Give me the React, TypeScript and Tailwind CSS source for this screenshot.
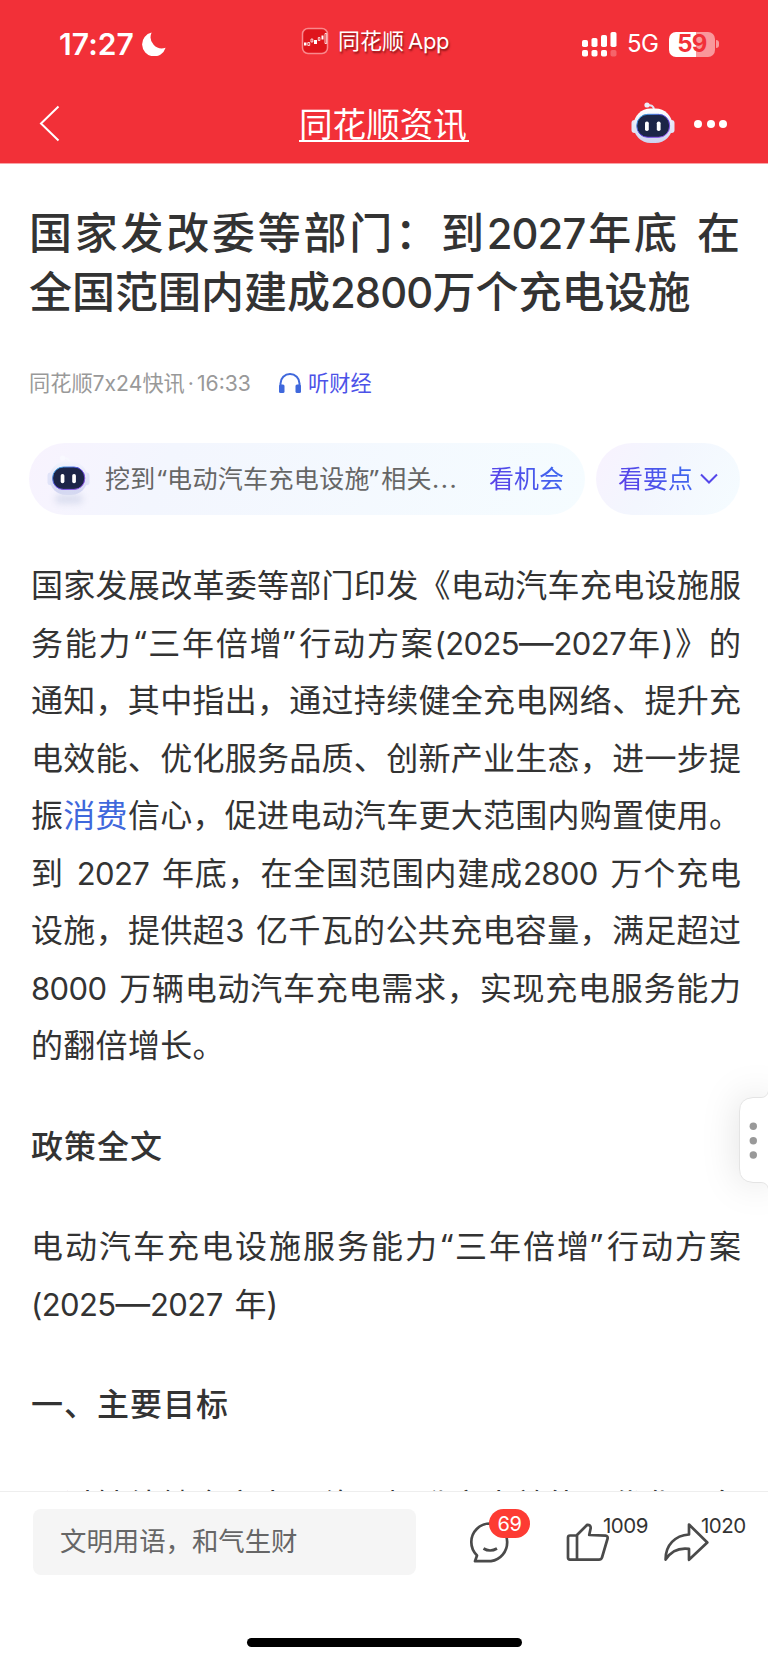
import React from 'react';

interface TextLineProps {
  children: React.ReactNode;
  last?: boolean;
}

interface RobotProps {
  id: string;
  className?: string;
  faded?: boolean;
}

const signalBars = [
  { x: 0, y: 8, h: 7 },
  { x: 9.5, y: 6, h: 9 },
  { x: 19, y: 3, h: 12 },
  { x: 28.5, y: 0, h: 15 },
];

// One row of article text; every row except the last one of a paragraph is justified
function TextLine({ children, last = false }: TextLineProps) {
  return (
    <span
      className={
        last
          ? 'block whitespace-nowrap text-left'
          : 'block whitespace-nowrap text-justify [text-align-last:justify]'
      }
    >
      {children}
    </span>
  );
}

// Latin digits sit a little tighter than the Chinese text around them
function Num({ children }: { children: React.ReactNode }) {
  return <span className="text-[0.97em] leading-none tracking-[-0.02em]">{children}</span>;
}

function Dash() {
  return <span className="text-[1.08em] leading-none">—</span>;
}

function Quoted({ children }: { children: React.ReactNode }) {
  return (
    <>
      <span className="pl-[0.08em] font-['Noto_Sans'] leading-none">“</span>
      {children}
      <span className="pr-[0.08em] font-['Noto_Sans'] leading-none">”</span>
    </>
  );
}

function Robot({ id, className, faded = false }: RobotProps) {
  return (
    <svg viewBox="0 0 44 42" className={className} fill="none">
      <defs>
        <linearGradient id={`${id}-head`} x1="0" y1="0" x2="0" y2="1">
          <stop offset="0" stopColor={faded ? '#f4f5fd' : '#ffffff'} />
          <stop offset="1" stopColor={faded ? '#cfd3f2' : '#cdd2ef'} />
        </linearGradient>
        <linearGradient id={`${id}-rim`} x1="0" y1="0" x2="1" y2="1">
          <stop offset="0" stopColor="#38bde8" />
          <stop offset="0.5" stopColor="#5a3fe0" />
          <stop offset="1" stopColor="#a45cf0" />
        </linearGradient>
      </defs>
      <path d="M16 3.5C20 2.5 23 4 23 8" stroke={faded ? '#f7f8fe' : '#dfe2f3'} strokeWidth="2" />
      <circle cx="16" cy="3" r="2.6" fill={faded ? '#f9f9ff' : '#eceefa'} />
      <rect x="0.5" y="18" width="6" height="13" rx="3" fill={faded ? '#e0e3f8' : '#e3e6f6'} />
      <rect x="37.5" y="18" width="6" height="13" rx="3" fill={faded ? '#e0e3f8' : '#e3e6f6'} />
      <rect x="2.5" y="6.5" width="39" height="34.5" rx="17" fill={`url(#${id}-head)`} />
      <rect x="5.8" y="12.3" width="32.8" height="23" rx="11" fill="#1c2547" stroke={`url(#${id}-rim)`} />
      <rect x="14" y="19.5" width="3.8" height="9.5" rx="1.8" fill="#fff" />
      <rect x="25.8" y="19.5" width="3.8" height="9.5" rx="1.8" fill="#fff" />
    </svg>
  );
}

function StatusBar() {
  return (
    <div className="flex h-[88px] items-center">
      <div className="flex w-[301px] items-center pl-[59px]">
        <span className="w-[76px] whitespace-nowrap text-[30px] font-semibold leading-none tracking-[0.1px]">17:27</span>
        <svg viewBox="0 0 24 24" className="ml-[7px] h-6 w-6" fill="#fff">
          <path d="M9.6 0.6A12 12 0 1 0 23.6 15.8A11.3 11.3 0 0 1 9.6 0.6Z" />
        </svg>
      </div>
      <div className="flex w-[281px] items-center pb-1.5">
        <svg viewBox="0 0 28 28" className="h-7 w-7" fill="none">
          <rect x="1.5" y="1.5" width="25" height="25" rx="5.5" fill="#df151c" stroke="#f9888c" strokeWidth="1.5" />
          <path d="M3 15.5h2.5v3H3zM13 13h3v4h-3zM20.5 8.5h2v4h-2z" fill="#fff" />
          <path d="M6.8 15.5h1.9v3H6.8zM10 12h1.8v3H10zM17.3 10.5h1.6v3h-1.6zM24 6.5h1.7v10H24z" stroke="#fff" strokeWidth="0.8" />
        </svg>
        <span className="ml-[9px] whitespace-nowrap text-[22px] leading-7 [text-shadow:1px_2px_2px_rgba(70,0,0,0.6)]">
          同花顺<span className="ml-1 tracking-[-0.3px]">App</span>
        </span>
      </div>
      <svg viewBox="0 0 36 25" className="h-[25px] w-9" fill="#fff">
        {signalBars.map((bar, index) => (
          <g key={bar.x}>
            <rect x={bar.x} y={bar.y} width="6" height={bar.h} rx="1.8" />
            <rect x={bar.x} y="18" width="6" height="6.5" rx="1.8" opacity={index === 3 ? 0.25 : 1} />
          </g>
        ))}
      </svg>
      <span className="ml-[9px] w-[34px] text-[24px] leading-none tracking-[-0.5px]">5G</span>
      <div className="ml-[8px] flex h-[25px] w-[46px] items-center justify-center rounded-[7px] bg-[linear-gradient(90deg,#fff_58%,#f9989b_58%)] text-[24px] font-bold leading-none tracking-[-0.8px] text-[#f23038]">
        59
      </div>
      <span className="ml-[1px] h-2 w-[3px] rounded-r-full bg-[#f9989b]" />
    </div>
  );
}

function NavBar() {
  return (
    <div className="flex h-[75px] items-center">
      <svg viewBox="0 0 21 37" className="mb-1 ml-[39px] h-[37px] w-[21px]" fill="none" stroke="#fff" strokeWidth="2">
        <path d="M19.5 1.5L2 18.5L19.5 35.5" />
      </svg>
      <h1 className="ml-[239px] h-[32px] w-[170px] whitespace-nowrap border-b-2 border-white text-[33.6px] leading-[30px]">
        同花顺资讯
      </h1>
      <Robot id="nav" className="mb-1.5 ml-[162px] h-[42px] w-11" />
      <div className="mb-[3px] ml-[19px] flex gap-[4.5px]">
        <span className="h-2 w-2 rounded-full bg-white" />
        <span className="h-2 w-2 rounded-full bg-white" />
        <span className="h-2 w-2 rounded-full bg-white" />
      </div>
    </div>
  );
}

function InsightBar() {
  return (
    <div className="-ml-px mt-[44px] flex h-[72px] w-[711px] gap-[11px]">
      <div className="flex w-[556px] items-center rounded-full bg-[linear-gradient(115deg,#f8f3fe_0%,#f3f6fe_25%,#f5fcff_100%)] pl-[18px]">
        <div className="flex w-[43px] flex-col items-center">
          <Robot id="insight" className="h-[41px] w-[43px]" faded />
          <span className="-mt-0.5 h-2.5 w-7 rounded-full bg-[#dcdff0] blur-[3px]" />
        </div>
        <span className="ml-[15px] w-[354px] whitespace-nowrap text-[25px] leading-9 tracking-[0.35px] text-[#666]">
          挖到<Quoted>电动汽车充电设施</Quoted>相关<span className="tracking-[1.6px]">...</span>
        </span>
        <span className="ml-[30px] whitespace-nowrap bg-[linear-gradient(60deg,#5e3be6,#3a6cf0)] bg-clip-text text-[25px] leading-9 text-transparent">
          看机会
        </span>
      </div>
      <div className="flex w-[144px] items-center rounded-full bg-[linear-gradient(120deg,#f8f2fe_0%,#f3f6fe_40%,#f5fcff_100%)] pl-[22px]">
        <span className="whitespace-nowrap bg-[linear-gradient(60deg,#5e3be6,#3a6cf0)] bg-clip-text text-[25px] leading-9 text-transparent">
          看要点
        </span>
        <svg viewBox="0 0 18 12" className="ml-[7px] h-3 w-[18px]" fill="none" stroke="#5547ea" strokeWidth="2">
          <path d="M1 1.5L9 9.5L17 1.5" />
        </svg>
      </div>
    </div>
  );
}

function Article() {
  return (
    <article className="h-[1327px] overflow-hidden px-[30px] pt-[40px] text-[#333]">
      <h2 className="-ml-px w-[711px] text-[43px] font-medium leading-[59px] [word-spacing:3px]">
        <TextLine>
          国家发改委等部门：到<Num>2027</Num>年底 在
        </TextLine>
        <TextLine last>
          全国范围内建成<Num>2800</Num>万个充电设施
        </TextLine>
      </h2>
      <div className="mt-[45px] flex h-8 items-center text-[21.2px] leading-8 text-[#999]">
        <span className="-ml-px w-[222px] whitespace-nowrap">
          同花顺7x24快讯<span className="mx-[3px]">·</span>16:33
        </span>
        <svg viewBox="0 0 24 22" className="ml-[27px] h-[22px] w-6" fill="none">
          <path d="M2.5 14V11.5a9.5 9.5 0 0 1 19 0V14" stroke="#3f68dc" strokeWidth="2" />
          <rect x="1" y="12.5" width="5.5" height="8.5" rx="1.5" fill="#3f68dc" />
          <rect x="17.5" y="12.5" width="5.5" height="8.5" rx="1.5" fill="#3f68dc" />
        </svg>
        <span className="ml-[6px] whitespace-nowrap text-[#4c52e8]">听财经</span>
      </div>
      <InsightBar />
      <div className="ml-px mt-[42px] w-[710px] text-[32px] leading-[57.5px] [word-spacing:3px]">
        <p>
          <TextLine>国家发展改革委等部门印发《电动汽车充电设施服</TextLine>
          <TextLine>
            务能力<Quoted>三年倍增</Quoted>行动方案<Num>(2025</Num><Dash /><Num>2027</Num>年)》的
          </TextLine>
          <TextLine>通知，其中指出，通过持续健全充电网络、提升充</TextLine>
          <TextLine>电效能、优化服务品质、创新产业生态，进一步提</TextLine>
          <TextLine>
            振<span className="text-[#3f68dc]">消费</span>信心，促进电动汽车更大范围内购置使用。
          </TextLine>
          <TextLine>
            到 <Num>2027</Num> 年底，在全国范围内建成<Num>2800</Num> 万个充电
          </TextLine>
          <TextLine>
            设施，提供超<Num>3</Num> 亿千瓦的公共充电容量，满足超过
          </TextLine>
          <TextLine>
            <Num>8000</Num> 万辆电动汽车充电需求，实现充电服务能力
          </TextLine>
          <TextLine last>
            <span className="tracking-[0.3px]">的翻倍增长。</span>
          </TextLine>
        </p>
        <h3 className="mt-[43px] font-medium tracking-[1px]">政策全文</h3>
        <p className="mt-[43px]">
          <TextLine>
            电动汽车充电设施服务能力<Quoted>三年倍增</Quoted>行动方案
          </TextLine>
          <TextLine last>
            <Num>(2025</Num><Dash /><Num>2027</Num> 年)
          </TextLine>
        </p>
        <h3 className="mt-[43px] font-medium tracking-[1px]">一、主要目标</h3>
        <p className="mt-[43px]">
          <TextLine>通过持续健全充电网络、提升充电效能、优化服务</TextLine>
        </p>
      </div>
    </article>
  );
}

function BottomBar() {
  return (
    <footer className="h-[171px] border-t border-[#eee] bg-white">
      <div className="flex pl-[33px] pt-[17px]">
        <div className="flex h-[66px] w-[383px] items-center rounded-lg bg-[#f5f5f5] pl-[27px] text-[26.4px] text-[#666]">
          文明用语，和气生财
        </div>
        <div className="relative ml-[53px] mt-[12px] h-[42px] w-[42px]">
          <svg viewBox="0 0 42 42" className="h-[42px] w-[42px]" fill="none" stroke="#4a4a4a" strokeWidth="2.7" strokeLinejoin="round">
            <path d="M21 2.5C10.5 2.5 2.3 10.8 2.3 21C2.3 26.5 4.5 31 8 34.5L6 40.2H22A19 19 0 0 0 21 2.5Z" />
            <path d="M14.5 27.5Q21 31.5 28 27.5" />
          </svg>
          <span className="absolute -top-3 left-5 flex h-[29px] w-[41px] items-center justify-center rounded-full bg-[#fd3b33] text-[20px] leading-none tracking-[-0.5px] text-white">
            69
          </span>
        </div>
        <div className="relative ml-[55px] mt-[14px] h-10 w-[43px]">
          <svg viewBox="0 0 43 40" className="h-10 w-[43px]" fill="none" stroke="#4a4a4a" strokeWidth="2.7" strokeLinejoin="round">
            <path d="M11 12.5H4Q2 12.5 2 14.5V34.5Q2 36.6 4 36.6H33Q35.2 36.6 36 34.5L41.6 15.5Q42 13 39.5 12.7L23.2 12L24.7 5Q24.7 1.6 21.2 1.8L11 12V36.6" />
          </svg>
          <span className="absolute -top-[9px] left-[37px] text-[20.5px] leading-6 tracking-[-0.5px] text-[#333]">1009</span>
        </div>
        <div className="relative ml-[55px] mt-[14px] h-10 w-[45px]">
          <svg viewBox="0 0 45 40" className="h-10 w-[45px]" fill="none" stroke="#4a4a4a" strokeWidth="2.7" strokeLinejoin="round">
            <path d="M25 1.5L43.3 19.5L25 36.8V25.8C15 24.5 7 28 1.6 36.5C1.5 22 11 12.5 25 11.5Z" />
          </svg>
          <span className="absolute -top-[9px] left-[37px] text-[20.5px] leading-6 tracking-[-0.5px] text-[#333]">1020</span>
        </div>
      </div>
      <div className="mx-auto mt-[63px] h-[9px] w-[275px] rounded-full bg-black" />
    </footer>
  );
}

function SideHandle() {
  return (
    <svg
      viewBox="0 0 29 98"
      className="absolute right-0 top-[1091px] h-[98px] w-[29px] overflow-visible [filter:drop-shadow(0_0_18px_rgba(0,0,0,0.12))]"
    >
      <path
        d="M29.5 0Q28 6.5 22 6.5H14Q0.5 7.5 0.5 20V78Q0.5 90.5 14 91.5H22Q28 91.5 29.5 98Z"
        fill="#fff"
        stroke="#e4e4e4"
        strokeWidth="1"
      />
      <circle cx="14.3" cy="35.3" r="3.7" fill="#999" />
      <circle cx="14.3" cy="49.7" r="3.7" fill="#999" />
      <circle cx="14.3" cy="64" r="3.7" fill="#999" />
    </svg>
  );
}

export default function App() {
  return (
    <div lang="zh-CN" className="relative h-[1662px] w-[768px] overflow-hidden bg-white font-['Inter','Noto_Sans_CJK_SC',sans-serif]">
      <header className="h-[164px] border-b border-[#f9a3a6] bg-[#f23038] text-white">
        <StatusBar />
        <NavBar />
      </header>
      <Article />
      <SideHandle />
      <BottomBar />
    </div>
  );
}
